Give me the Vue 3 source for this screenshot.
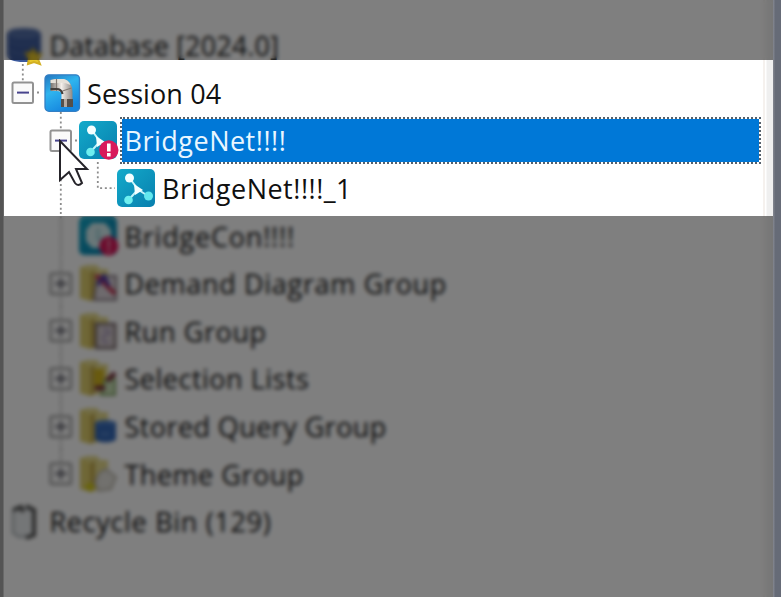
<template>
  <div class="window">
    <div class="edge edge--left" />
    <main class="tree">
      <div
          v-for="row in rows"
          :key="row.label"
          class="row"
      >
        <svg
            v-for="(guide, index) in row.guides"
            :key="index"
            class="guide"
            viewBox="0 0 37.5 47.6"
        >
          <path v-if="guidePaths[guide]" class="guide-line" :d="guidePaths[guide]" />
          <g v-if="expanderGuides.includes(guide)" :class="{ collapsed: guide.startsWith('closed') }">
            <rect class="expander" x="8.5" y="13.4" width="20.5" height="20.5" rx="1.5" />
            <path class="expander-sign" d="M13 23.6h12" />
            <path v-if="guide.startsWith('closed')" class="expander-sign" d="M18.8 18v11.5" />
          </g>
        </svg>

        <svg class="icon" viewBox="0 0 38 38">
          <g v-if="row.icon === 'database'">
            <path d="M3 8Q4 2 20 2T37 8V29Q36 36 20 36T3 29Z" fill="#3b599c" />
            <ellipse cx="20" cy="8" rx="16" ry="5.5" fill="#536fa9" />
            <path d="M4 15q16 8 32 0M4 24q16 8 32 0" fill="none" stroke="#4b68a3" stroke-width="2" />
            <path d="M29 23l3 5 5 0-3 5 2 5-6-2-6 2 1-6-3-5 5 0z" fill="#e8c82a" stroke="#d2af22" stroke-width="2" />
          </g>
          <g v-else-if="row.icon === 'session'">
            <defs>
              <linearGradient id="sky" x1="0" y1="0" x2="0.5" y2="1">
                <stop offset="0" stop-color="#2375be" />
                <stop offset="0.45" stop-color="#2fb4ee" />
                <stop offset="1" stop-color="#1586df" />
              </linearGradient>
              <linearGradient id="pipe" x1="0" y1="0" x2="1" y2="0">
                <stop offset="0" stop-color="#77716c" />
                <stop offset="0.5" stop-color="#f4efea" />
                <stop offset="1" stop-color="#8d8884" />
              </linearGradient>
            </defs>
            <g transform="translate(1.5 0)">
              <rect x="1.5" y="0.8" width="34.5" height="36.5" rx="4" fill="url(#sky)" stroke="#347fc4" stroke-width="1.3" />
              <path d="M7 6l5-1h8q9 2 9 13v11H18V20q0-3-5-3H7Z" fill="url(#pipe)" />
              <path d="M7 6l5-1h8q5 1 7 6-6-3-13-2H7Z" fill="#e6e1d9" />
              <path d="M13 5v12M19 17l9-3" stroke="#837a73" stroke-width="1.2" />
              <path d="M7 15h6q5 0 6 5" fill="none" stroke="#423e3c" stroke-width="2.2" />
              <rect x="17.5" y="25" width="12" height="8" fill="#554f49" />
              <path d="M22 25v8" stroke="#b6aaa0" stroke-width="3" />
            </g>
          </g>
          <g v-else-if="row.icon === 'network' || row.icon === 'control'">
            <defs>
              <linearGradient id="teal" x1="0" y1="0" x2="1" y2="1">
                <stop offset="0" stop-color="#13aaca" />
                <stop offset="1" stop-color="#087fae" />
              </linearGradient>
            </defs>
            <rect x="0" y="0" width="38" height="38" rx="5" fill="url(#teal)" />
            <g v-if="row.icon === 'network'">
              <path d="M12.5 9L21 20.5 11.5 31M21 20.5L31 27" fill="none" stroke="#c4f4fb" stroke-width="2" />
              <circle cx="12.5" cy="9" r="4.5" fill="#f5ffff" />
              <path d="M17 15l9 6-8 5Z" fill="#f5ffff" />
              <circle cx="11.5" cy="31" r="4.3" fill="#6eeff0" />
              <circle cx="31.5" cy="27" r="4.5" fill="#62e8ee" />
            </g>
            <g v-else>
              <path d="M13 6h13l6 7v12l-7 6H13l-6-7V13Z" fill="#d4eff2" />
              <path d="M19 11v11h8" fill="none" stroke="#a3d5da" stroke-width="3" />
            </g>
            <g v-if="row.alert">
              <circle cx="29.8" cy="29" r="9.7" fill="#d8195b" />
              <path d="M29.8 22.5v8M29.8 32v3.5" stroke="#fff" :stroke-width="row.icon === 'network' ? 3.6 : 1.2" />
            </g>
          </g>
          <g v-else-if="row.icon === 'bin'">
            <path d="M9 9l5-4 17 3-1 26-15 1-6-4Z" fill="#e9ecee" stroke="#b4babd" stroke-width="2.5" />
            <path d="M9 8l8-3 2 5M22 4l8 4v25l-8 3" fill="none" stroke="#505050" stroke-width="3.8" />
          </g>
          <g v-else>
            <path d="M1 3l7-2h10l3 4h8v28l-18 4-10-3Z" fill="#e6db8c" />
            <path d="M1 3l11 5v29L1 34Z" fill="#dfcf6d" />
            <path d="M11 8l5-2v28l-5 3Z" fill="#c4ac50" />
            <g v-if="row.icon === 'demand'">
              <path d="M18 12h19v24H15Z" fill="#ddd5db" stroke="#877b84" stroke-width="2" />
              <path d="M17 11l19 19" stroke="#c33655" stroke-width="4.5" />
              <path d="M19 21l6-9 5 10" fill="none" stroke="#4d3aa5" stroke-width="3.5" />
            </g>
            <g v-else-if="row.icon === 'run'">
              <rect x="17" y="12" width="19" height="24" fill="#d9d0d1" stroke="#77686c" stroke-width="2.6" />
              <path d="M23 18h7v5h-6v7h7" fill="none" stroke="#a393b8" stroke-width="2" />
            </g>
            <g v-else-if="row.icon === 'selection'">
              <path d="M15 10h10v17H15Z" fill="#d2b51f" />
              <path d="M26 20h10v16H22Z" fill="#c8dfb4" stroke="#81a565" stroke-width="2" />
              <path d="M16 29h10M28 22l8-8" stroke="#7b3941" stroke-width="5" />
            </g>
            <g v-else-if="row.icon === 'query'">
              <path d="M16 15q10-4 21 0v18q-10 5-21 0Z" fill="#3569b8" />
              <path d="M18 17q8-3 17 0M22 27h8" fill="none" stroke="#5484c8" stroke-width="3" />
            </g>
            <g v-else>
              <path d="M10 27l6 3-3 7-8-4Z" fill="#d2c91e" />
              <path d="M20 18l7-4 10 8-5 12-12 2-4-8Z" fill="#e4e2dc" stroke="#bcb8ad" stroke-width="2" />
            </g>
          </g>
        </svg>

        <span class="label" :class="{ 'label--selected': row.selected }">
          <span :style="{ letterSpacing: `${row.spacing}px` }">{{ row.label }}</span>
        </span>
      </div>
    </main>
    <div class="gutter" />
    <div class="edge edge--right" />

    <div class="shade shade--top" />
    <div class="shade shade--bottom" />

    <svg class="cursor" viewBox="0 0 32 48">
      <path d="M2 2V41L11 33L17 44Q20 48 24 44L18 30H29Z" fill="#fff" stroke="#252329" stroke-width="2" />
    </svg>
  </div>
</template>

<script setup>
const expanderGuides = ['open', 'openLast', 'closed', 'closedLast']

const guidePaths = {
  open: 'M18.8 -5V13M18.8 34V47.6M33 23.5h2',
  openLast: 'M18.8 -5V13M33 23.5h2',
  closed: 'M18.8 0V13M18.8 34V47.6',
  closedLast: 'M18.8 0V13',
  line: 'M18.8 0V47.6',
  corner: 'M18.8 -3V23.2H36',
}

const rows = [
  { label: 'Database [2024.0]', icon: 'database', guides: [], spacing: 0.1 },
  { label: 'Session 04', icon: 'session', guides: ['openLast'], spacing: 0.1 },
  { label: 'BridgeNet!!!!', icon: 'network', guides: ['blank', 'open'], spacing: 0.5, alert: true, selected: true },
  { label: 'BridgeNet!!!!_1', icon: 'network', guides: ['blank', 'line', 'corner'], spacing: 0.5 },
  { label: 'BridgeCon!!!!', icon: 'control', guides: ['blank', 'line'], spacing: 0.8, alert: true },
  { label: 'Demand Diagram Group', icon: 'demand', guides: ['blank', 'closed'], spacing: 0.68 },
  { label: 'Run Group', icon: 'run', guides: ['blank', 'closed'], spacing: 0.6 },
  { label: 'Selection Lists', icon: 'selection', guides: ['blank', 'closed'], spacing: 0.5 },
  { label: 'Stored Query Group', icon: 'query', guides: ['blank', 'closed'], spacing: 0.42 },
  { label: 'Theme Group', icon: 'theme', guides: ['blank', 'closedLast'], spacing: 0.5 },
  { label: 'Recycle Bin (129)', icon: 'bin', guides: [], spacing: 0.68 },
]
</script>

<style>
body {
  margin: 0;
  overflow: hidden;
}
</style>

<style scoped>
.window {
  position: relative;
  display: flex;
  width: 781px;
  height: 597px;
  overflow: hidden;
  background: #fff;
  color: #101010;
  font-family: "Open Sans", "Noto Sans", sans-serif;
  font-size: 27px;
}

.edge {
  position: relative;
  z-index: 2;
  flex: none;
}

.edge--left {
  width: 4px;
  background: linear-gradient(90deg, #545454 65%, #737373);
}

.edge--right {
  width: 8px;
  background: linear-gradient(90deg, #858891, #666b77 30%);
}

.tree {
  flex: 1;
  min-width: 0;
  padding-top: 21.9px;
}

.row {
  display: flex;
  align-items: center;
  height: 47.6px;
}

.guide {
  flex: none;
  width: 37.5px;
  height: 47.6px;
  overflow: visible;
}

.guide-line {
  fill: none;
  stroke: #8c8c8c;
  stroke-width: 1.8;
  stroke-dasharray: 2 2.75;
}

.expander {
  fill: #fafafa;
  stroke: #929292;
  stroke-width: 2;
}

.expander-sign {
  stroke: #47438c;
  stroke-width: 2;
}

.collapsed .expander-sign {
  stroke: #4c4c58;
}

.icon {
  flex: none;
  width: 38px;
  height: 38px;
  margin: 0 3px 1px 0;
  overflow: visible;
}

.label {
  box-sizing: border-box;
  flex: 1;
  height: 47px;
  margin-right: 1px;
  padding-left: 2.5px;
  border: 2px solid transparent;
  line-height: 43.6px;
  white-space: pre;
}

.label--selected {
  border: 2px dotted #55606b;
  background: #0078d7;
  background-clip: padding-box;
  color: #e9f6ff;
}

.gutter {
  flex: none;
  width: 11px;
  background: linear-gradient(90deg, #fff 0 1px, #f5f1ee 1px 3px, #fff 3px 4px, #efefef 5px);
}

.shade {
  position: absolute;
  left: 4px;
  right: 8px;
  background: rgba(0, 0, 0, 0.5);
  backdrop-filter: blur(2px);
}

.shade--top {
  top: 0;
  height: 60px;
}

.shade--bottom {
  top: 216px;
  bottom: 0;
}

.cursor {
  position: absolute;
  top: 139px;
  left: 58px;
  width: 32px;
  height: 48px;
}
</style>
